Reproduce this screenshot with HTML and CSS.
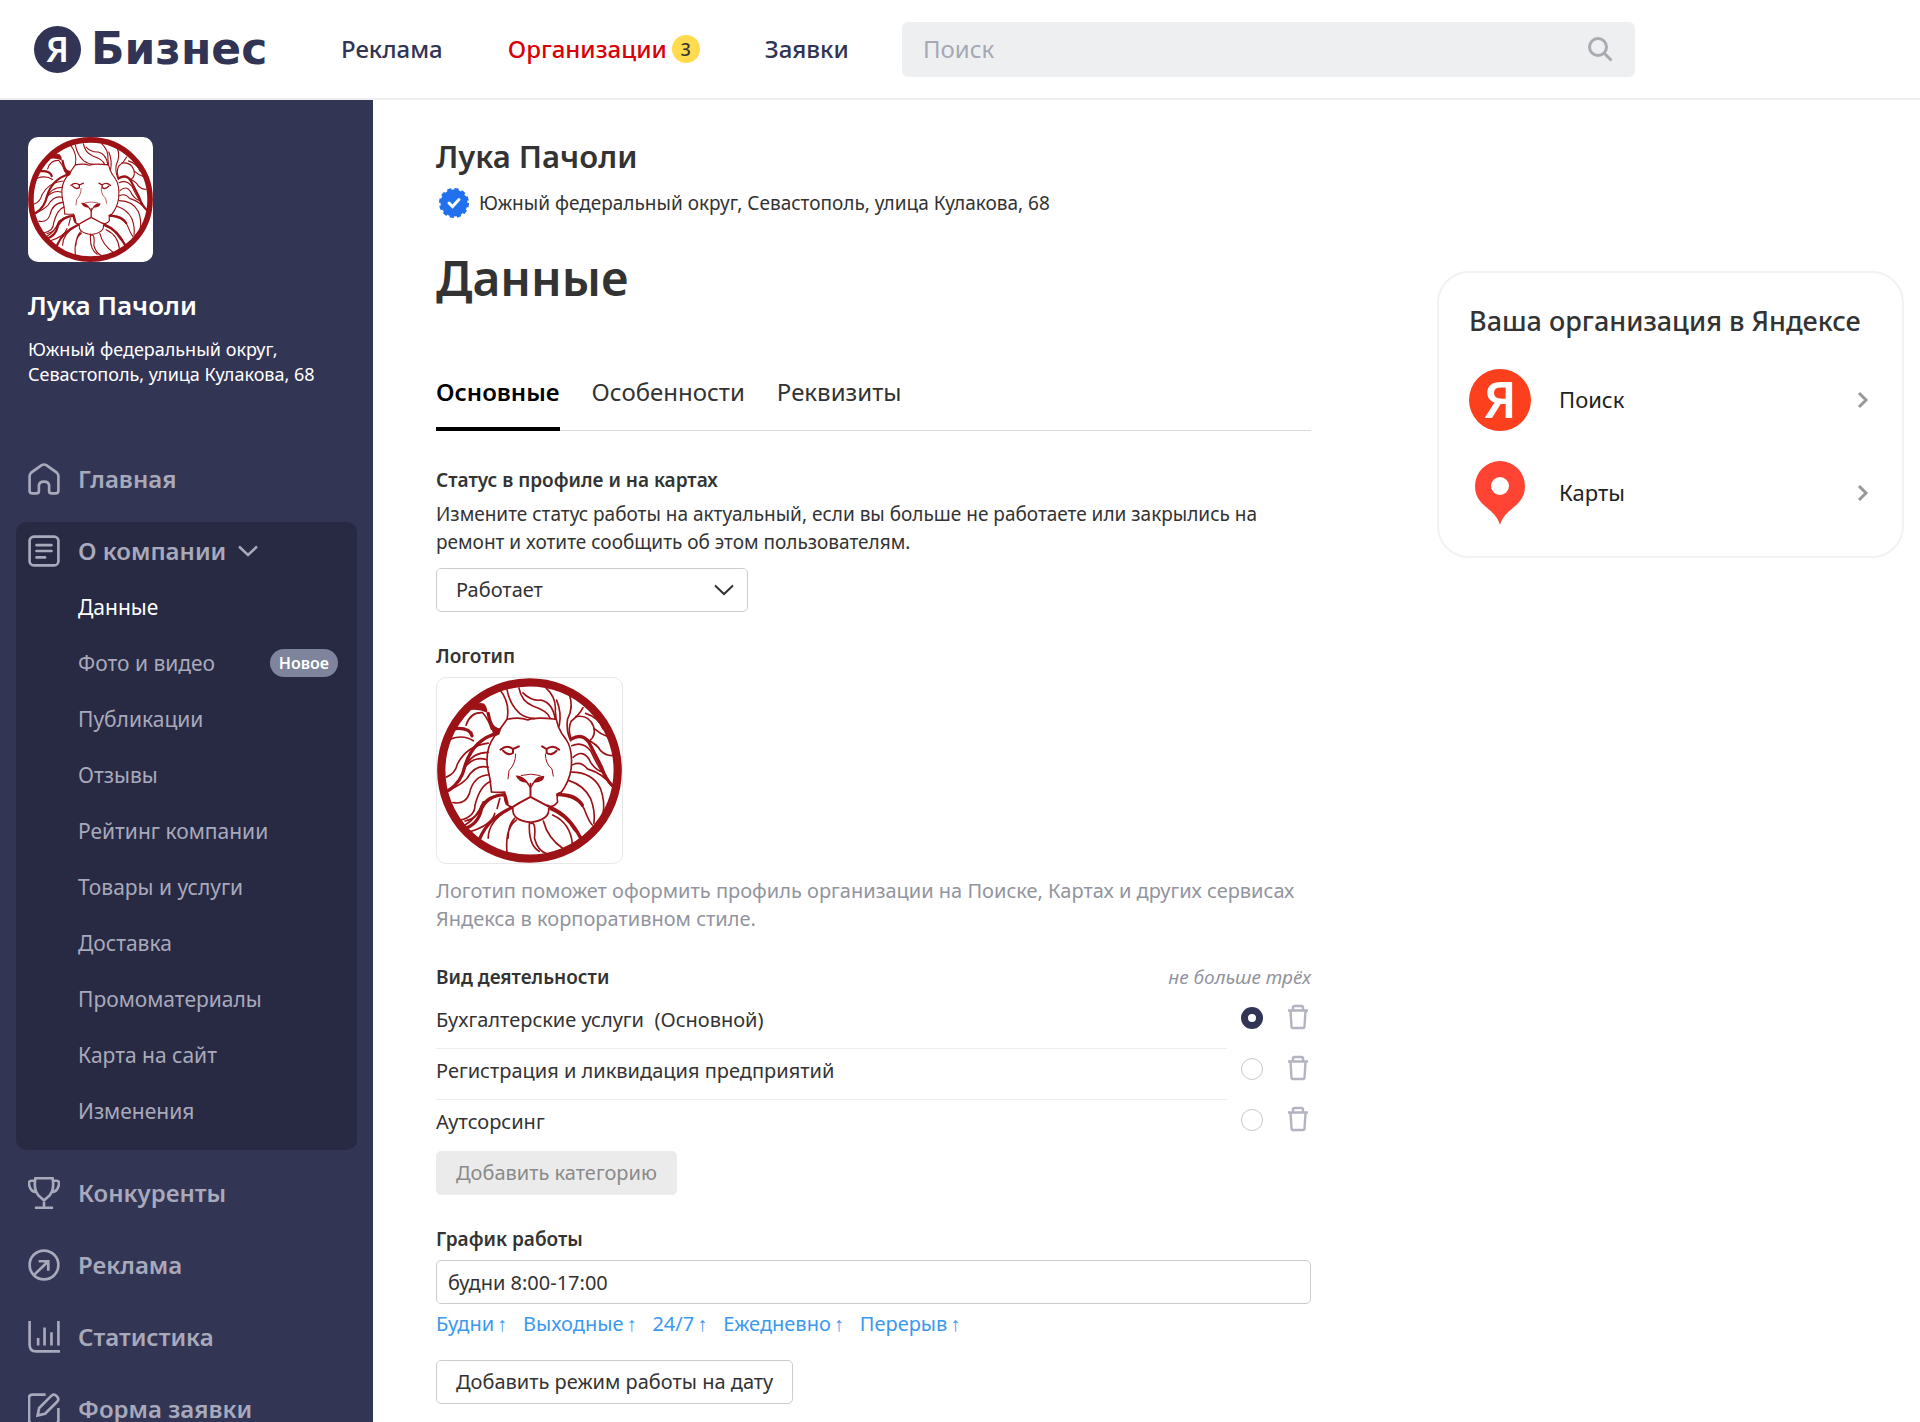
FILE: index.html
```html
<!DOCTYPE html>
<html lang="ru">
<head>
<meta charset="utf-8">
<meta name="viewport" content="width=device-width, initial-scale=1">
<title>Яндекс Бизнес — Данные</title>
<link rel="stylesheet" href="styles.css">
</head>
<body>
<svg class="sprite" aria-hidden="true">
  <symbol id="lion" viewBox="50 115 560 560">
    <g fill="none" stroke="#9c1216" stroke-linecap="round" stroke-linejoin="round">
      <circle cx="330" cy="395" r="267" stroke-width="25"/>
      <g stroke-width="5">
        <path d="M262 240 Q300 232 325 242 Q345 232 410 240"/>
        <path d="M240 150 Q272 190 262 240 Q245 265 225 290 Q195 330 203 385 Q212 420 215 460"/>
        <path d="M262 150 Q270 195 300 222 Q318 236 345 238"/>
        <path d="M298 145 Q305 185 340 200 Q385 215 392 236"/>
        <path d="M310 160 Q335 185 365 182 Q400 190 408 240"/>
        <path d="M380 145 Q412 175 408 215 Q410 265 440 300 Q462 330 456 390 Q450 430 425 462"/>
        <path d="M450 165 Q465 200 445 240 Q440 275 455 305"/>
        <path d="M412 182 Q428 220 420 260"/>
        <path d="M492 205 Q480 228 456 246 Q445 270 455 296"/>
        <path d="M470 232 Q510 225 524 262 Q532 290 512 305"/>
        <path d="M500 222 Q540 235 552 268 M526 268 Q545 285 566 292"/>
        <path d="M138 258 Q150 218 188 220 Q206 240 215 270"/>
        <path d="M90 300 Q130 285 160 305"/>
        <path d="M78 415 Q105 405 112 375 Q140 320 205 312"/>
        <path d="M90 455 Q120 430 130 395 Q150 340 205 340"/>
        <path d="M130 390 Q160 350 200 362"/>
        <path d="M85 455 Q120 440 140 420 Q165 375 205 385"/>
        <path d="M98 492 Q135 500 148 465 Q160 410 208 408"/>
        <path d="M120 545 Q165 535 165 500 Q180 440 212 428"/>
        <path d="M135 548 Q175 540 185 500 Q205 470 250 468"/>
        <path d="M458 320 Q490 305 515 335 Q545 400 580 442"/>
        <path d="M500 300 Q535 315 545 335 Q560 350 580 350"/>
        <path d="M462 355 Q490 330 510 360 Q520 385 545 398"/>
        <path d="M460 378 Q485 365 505 390 Q555 405 580 442"/>
        <path d="M458 400 Q520 400 545 450 Q560 490 552 530"/>
        <path d="M448 425 Q495 440 515 480 Q530 520 525 555"/>
        <path d="M420 470 Q475 475 495 510 Q510 550 520 560"/>
        <path d="M215 460 Q235 462 255 460 Q250 500 275 505"/>
        <path d="M425 462 Q410 460 415 490 Q400 510 385 500"/>
        <path d="M280 510 Q275 545 332 552 Q392 545 388 510"/>
        <path d="M205 600 Q205 550 265 515 M150 580 Q215 560 225 525"/>
        <path d="M262 645 Q255 570 290 545 M265 600 Q265 560 285 540"/>
        <path d="M330 550 Q325 620 360 640 M335 555 Q350 550 345 600 Q355 640 385 648"/>
        <path d="M372 548 Q385 600 432 632"/>
        <path d="M400 530 Q455 555 460 620 M392 512 Q440 530 465 575 L490 600"/>
        <path d="M190 490 Q170 540 135 560 M240 480 L232 510"/>
      </g>
      <g stroke-width="10">
        <path d="M105 268 Q150 265 156 290"/>
        <path d="M85 455 Q125 430 135 380 Q160 300 235 282 Q210 260 205 222"/>
        <path d="M456 300 Q490 280 510 310 L548 385 Q560 420 580 440"/>
        <path d="M130 572 Q175 560 185 510 Q205 470 255 468 L262 495"/>
        <path d="M415 468 Q470 465 490 500"/>
        <path d="M275 508 Q205 540 180 600"/>
        <path d="M395 508 Q450 530 485 600"/>
      </g>
      <g stroke-width="6">
        <path d="M333 435 L333 475 Q300 492 275 508 M333 475 Q365 492 395 508"/>
        <path d="M242 332 Q262 315 280 330 L298 322 M250 335 Q265 352 280 342 L280 330"/>
        <path d="M420 332 Q400 315 382 330 L368 322 M412 335 Q397 352 382 342 L382 330"/>
        <path d="M288 345 Q288 375 268 395 L265 420 M378 345 Q378 375 398 390 L402 412" stroke-width="3"/>
        <path d="M305 410 Q333 402 362 410" stroke-width="3"/>
      </g>
    </g>
    <g fill="#9c1216">
      <path d="M288 410 Q310 408 328 434 L333 445 L338 434 Q352 408 375 412 Q374 430 345 432 L333 450 L320 432 Q296 430 288 410Z"/>
      <path d="M140 215 Q165 185 192 192 Q204 205 202 220 Q170 205 140 215Z"/>
      <path d="M210 240 Q222 268 245 268 Q240 290 222 292 Q214 270 210 240Z"/>
    </g>
  </symbol>
  <symbol id="trash" viewBox="0 0 22 26">
    <g fill="none" stroke="#b3b4c2" stroke-width="2.400">
      <path d="M1 6.500H21M6 6V3.500Q6 2 7.500 2H14.500Q16 2 16 3.500V6" />
      <path d="M3.500 7L4.500 22.500Q4.600 24 6 24H16Q17.400 24 17.500 22.500L18.500 7"/>
    </g>
  </symbol>
  <symbol id="chevron" viewBox="0 0 12 18">
    <path d="M2 2L9 9L2 16" fill="none" stroke="#999" stroke-width="3"/>
  </symbol>
</svg>

<header class="header">
  <a class="brand" href="#"><span class="brand-mark">Я</span><span class="brand-name">Бизнес</span></a>
  <nav class="topnav">
    <a href="#">Реклама</a>
    <a class="topnav-active" href="#">Организации<span class="count">3</span></a>
    <a href="#">Заявки</a>
  </nav>
  <label class="search">
    <input type="search" placeholder="Поиск" aria-label="Поиск">
    <svg width="26" height="26" viewBox="0 0 26 26" fill="none" stroke="#a9abb3" stroke-width="3"><circle cx="11" cy="11" r="8.500"/><path d="M17 17L24.500 24.500"/></svg>
  </label>
</header>

<div class="shell">
  <aside class="sidebar">
    <div class="profile">
      <svg class="avatar" role="img" aria-label="Лука Пачоли"><use href="#lion"/></svg>
      <p class="profile-name">Лука Пачоли</p>
      <p class="profile-address">Южный федеральный округ, Севастополь, улица Кулакова, 68</p>
    </div>
    <nav class="menu">
      <a class="menu-item" href="#">
        <svg class="icon" viewBox="0 0 30 30"><path d="M1.500 12.500Q1.500 10.500 3 9L12.500 2.200Q15 .6 17.500 2.200L27 9Q28.500 10.500 28.500 12.500V26Q28.500 28.500 26 28.500H22Q19.800 28.500 19.800 26.500V21.500Q19.800 17.500 15 17.500T10.200 21.500V26.500Q10.200 28.500 8 28.500H4Q1.500 28.500 1.500 26Z"/></svg>
        Главная</a>
      <div class="menu-group">
        <a class="menu-item" href="#">
          <svg class="icon" viewBox="0 0 30 30"><rect x="1.500" y="1.500" width="27" height="27" rx="4"/><path d="M8 9.500H22M8 15H22M8 21H16" stroke-linecap="round"/></svg>
          О компании
          <svg class="menu-arrow" viewBox="0 0 20 12"><path d="M1 1.500L10 10L19 1.500"/></svg></a>
        <a class="sub-item sub-active" href="#">Данные</a>
        <a class="sub-item" href="#">Фото и видео<span class="new">Новое</span></a>
        <a class="sub-item" href="#">Публикации</a>
        <a class="sub-item" href="#">Отзывы</a>
        <a class="sub-item" href="#">Рейтинг компании</a>
        <a class="sub-item" href="#">Товары и услуги</a>
        <a class="sub-item" href="#">Доставка</a>
        <a class="sub-item" href="#">Промоматериалы</a>
        <a class="sub-item" href="#">Карта на сайт</a>
        <a class="sub-item" href="#">Изменения</a>
      </div>
      <a class="menu-item" href="#">
        <svg class="icon" viewBox="0 0 30 30"><path d="M7 1H23Q25 11 20.500 17L15 22L9.500 17Q5 11 7 1ZM6.500 3.500H3Q.5 3.500 1 7Q2 14 8.500 14.500M23.500 3.500H27Q29.500 3.500 29 7Q28 14 21.500 14.500M15 22V28.500M6.500 28.800H23.500"/></svg>
        Конкуренты</a>
      <a class="menu-item" href="#">
        <svg class="icon" viewBox="0 0 30 30"><circle cx="15" cy="15" r="13.500"/><path d="M6 24L19 11.500M10 11.500H19V20.500"/></svg>
        Реклама</a>
      <a class="menu-item" href="#">
        <svg class="icon" viewBox="0 0 30 30"><path d="M1.500 0V22Q1.500 28.500 7.500 28.500H30M28.500 0V23M9.500 16V23M15.500 6V23M22 10.500V23"/></svg>
        Статистика</a>
      <a class="menu-item" href="#">
        <svg class="icon" viewBox="0 0 30 30"><path d="M16.500 1.500H4Q1 1.500 1 4.500V25.500Q1 28.500 4 28.500H25.500Q28.500 28.500 28.500 25.500V14M9 21L10.500 14L22 2.500Q24.500 .5 27 3T27.500 8L16 19.500Z"/></svg>
        Форма заявки</a>
    </nav>
  </aside>

  <main class="main">
    <div class="content">
      <h2 class="org-name">Лука Пачоли</h2>
      <p class="org-address">
        <svg width="32" height="32" viewBox="0 0 32 32"><g fill="#2170ee"><circle cx="16" cy="16" r="13.500"/><circle cx="16" cy="16" r="13.800" fill="none" stroke="#2170ee" stroke-width="2.500" stroke-dasharray="4.200 3.025"/></g><path d="M11 16L14.500 19.500L21 12.500" fill="none" stroke="#fff" stroke-width="3" stroke-linecap="round"/></svg>
        Южный федеральный округ, Севастополь, улица Кулакова, 68</p>
      <h1 class="page-title">Данные</h1>
      <nav class="tabs">
        <a class="tab-active" href="#">Основные</a>
        <a href="#">Особенности</a>
        <a href="#">Реквизиты</a>
      </nav>

      <section class="field">
        <label class="label" for="status">Статус в профиле и на картах</label>
        <p class="text">Измените статус работы на актуальный, если вы больше не работаете или закрылись на ремонт и хотите сообщить об этом пользователям.</p>
        <div class="select">
          <select id="status"><option>Работает</option></select>
          <svg viewBox="0 0 20 12"><path d="M1 1.500L10 10L19 1.500" fill="none" stroke="#333" stroke-width="2"/></svg>
        </div>
      </section>

      <section class="field">
        <h3 class="label">Логотип</h3>
        <svg class="logo-preview" role="img" aria-label="Логотип"><use href="#lion"/></svg>
        <p class="hint">Логотип поможет оформить профиль организации на Поиске, Картах и других сервисах Яндекса в корпоративном стиле.</p>
      </section>

      <section class="field">
        <div class="label-row"><h3 class="label">Вид деятельности</h3><em class="limit">не больше трёх</em></div>
        <div class="activity">
          <label for="act1">Бухгалтерские услуги&nbsp; (Основной)</label>
          <input type="radio" id="act1" name="activity" checked>
          <button type="button" aria-label="Удалить"><svg><use href="#trash"/></svg></button>
        </div>
        <div class="activity">
          <label for="act2">Регистрация и ликвидация предприятий</label>
          <input type="radio" id="act2" name="activity">
          <button type="button" aria-label="Удалить"><svg><use href="#trash"/></svg></button>
        </div>
        <div class="activity">
          <label for="act3">Аутсорсинг</label>
          <input type="radio" id="act3" name="activity">
          <button type="button" aria-label="Удалить"><svg><use href="#trash"/></svg></button>
        </div>
        <button class="button" type="button" disabled>Добавить категорию</button>
      </section>

      <section class="field">
        <label class="label" for="hours">График работы</label>
        <input class="textbox" id="hours" type="text" value="будни 8:00-17:00">
        <div class="presets">
          <a href="#">Будни<span>↑</span></a>
          <a href="#">Выходные<span>↑</span></a>
          <a href="#">24/7<span>↑</span></a>
          <a href="#">Ежедневно<span>↑</span></a>
          <a href="#">Перерыв<span>↑</span></a>
        </div>
        <button class="button" type="button">Добавить режим работы на дату</button>
      </section>
    </div>

    <aside class="card">
      <h2>Ваша организация в Яндексе</h2>
      <a class="service" href="#">
        <span class="service-ya">Я</span>
        <span class="service-name">Поиск</span>
        <svg class="service-arrow"><use href="#chevron"/></svg>
      </a>
      <a class="service" href="#">
        <svg class="service-pin" viewBox="0 0 62 64"><path d="M31 0A25 25 0 0 0 6 25C6 46 26 46 31 64C36 46 56 46 56 25A25 25 0 0 0 31 0Z" fill="#ff4433"/><circle cx="31" cy="25" r="9" fill="#fff"/></svg>
        <span class="service-name">Карты</span>
        <svg class="service-arrow"><use href="#chevron"/></svg>
      </a>
    </aside>
  </main>
</div>
</body>
</html>
```
FILE: styles.css
```css
* { box-sizing: border-box; }

body {
  display: flex;
  flex-direction: column;
  height: 100vh;
  margin: 0;
  overflow: hidden;
  background: #fff;
  color: #333;
  font: 19px/28px "Noto Sans", "Open Sans", sans-serif;
}

a { color: inherit; text-decoration: none; }
h1, h2, h3, p { margin: 0; }
button, input, select { font: inherit; color: inherit; }

.sprite { display: none; }

/* Header */
.header {
  display: flex;
  align-items: center;
  flex: none;
  height: 100px;
  padding: 0 34px;
  border-bottom: 2px solid #eeeeef;
  color: #313454;
}

.brand { display: flex; align-items: center; gap: 10px; width: 307px; }
.brand-mark {
  display: flex;
  align-items: center;
  justify-content: center;
  width: 47px;
  height: 47px;
  border-radius: 50%;
  background: #313454;
  color: #fff;
  font: 600 35px/46px "Noto Sans", sans-serif;
}
.brand-name { font: bold 44px/46px "DejaVu Sans", sans-serif; }

.topnav { display: flex; gap: 65px; width: 561px; font-size: 24px; font-weight: 500; }
.topnav a { display: flex; align-items: center; gap: 5px; }
.topnav-active { color: #d90007; }
.count {
  width: 28px;
  border-radius: 14px;
  background: #ffdb4d;
  color: #333;
  font-size: 18px;
  text-align: center;
}

.search {
  display: flex;
  align-items: center;
  width: 733px;
  height: 55px;
  padding: 0 22px 0 21px;
  border-radius: 6px;
  background: #eeeff1;
}
.search input {
  flex: 1;
  padding: 0;
  border: 0;
  background: none;
  font-size: 24px;
}
.search input::placeholder { color: #a6a8b5; opacity: 1; }

/* Sidebar */
.shell { display: flex; flex: 1; min-height: 0; }

.sidebar {
  flex: none;
  width: 373px;
  overflow: hidden;
  background: #333555;
  color: #fff;
}
.profile { height: 350px; padding: 37px 28px 0; }
.avatar { display: block; width: 125px; height: 125px; border-radius: 10px; background: #fff; }
.profile-name { margin-top: 25px; font-size: 26px; font-weight: 600; line-height: 36px; }
.profile-address { margin-top: 14px; font-size: 18px; line-height: 25px; }

.menu {
  display: flex;
  flex-direction: column;
  gap: 14px;
  padding: 0 16px;
  color: #a8a9bb;
}
.menu-item {
  display: flex;
  align-items: center;
  height: 58px;
  padding: 0 12px;
  font-size: 24px;
  font-weight: 600;
}
.icon { width: 32px; height: 32px; margin-right: 18px; fill: none; stroke: currentColor; stroke-width: 2.5; }
.menu-arrow { width: 20px; height: 12px; margin-left: 12px; fill: none; stroke: currentColor; stroke-width: 2.5; }
.menu-group { padding-bottom: 10px; border-radius: 10px; background: #282a44; }
.sub-item {
  display: flex;
  align-items: center;
  justify-content: space-between;
  height: 56px;
  padding: 0 19px 2px 62px;
  font-size: 21px;
}
.sub-active { color: #fff; }
.new {
  padding: 0 9px;
  border-radius: 14px;
  background: #7e849c;
  color: #fff;
  font-size: 16px;
  font-weight: 600;
}

/* Page content */
.main {
  display: flex;
  flex: 1;
  justify-content: space-between;
  align-items: flex-start;
  gap: 40px;
  padding: 38px 16px 0 63px;
}
.content { flex: 0 1 875px; }
.org-name { font-size: 31px; font-weight: 600; line-height: 36px; }
.org-address { display: flex; align-items: center; gap: 9px; height: 32px; margin-top: 13px; padding-left: 2px; }
.page-title { margin-top: 29px; font-size: 48px; font-weight: 600; line-height: 60px; }

.tabs {
  display: flex;
  gap: 32px;
  height: 66px;
  margin: 57px 0 35px;
  border-bottom: 1px solid #dcdcdc;
  font-size: 24px;
}
.tabs a { height: 66px; line-height: 54px; }
.tab-active { border-bottom: 4px solid #000; color: #000; font-weight: 600; }

.field { margin-bottom: 30px; }
.label { display: block; font-size: 19px; font-weight: 600; line-height: 28px; }
.text { margin-top: 6px; }
.hint { margin-top: 13px; color: #92949e; font-size: 20px; }

.select { position: relative; width: 312px; margin-top: 12px; }
.select select {
  appearance: none;
  width: 100%;
  height: 44px;
  padding: 0 19px;
  border: 1px solid #ccc;
  border-radius: 5px;
  background: #fff;
  font-size: 20px;
}
.select svg { position: absolute; top: 16px; right: 14px; width: 20px; height: 12px; pointer-events: none; }

.logo-preview {
  display: block;
  width: 187px;
  height: 187px;
  margin-top: 7px;
  border: 1px solid #e8e8e8;
  border-radius: 10px;
}

.label-row { display: flex; justify-content: space-between; margin-bottom: 7px; }
.limit { color: #92949e; }

.activity { display: flex; align-items: center; height: 51px; }
.activity label {
  flex: 1;
  margin-right: 14px;
  padding-bottom: 6px;
  border-bottom: 1px solid #eee;
  font-size: 20px;
  line-height: 44px;
}
.activity:nth-of-type(4) label { border-color: transparent; }
.activity input {
  appearance: none;
  width: 22px;
  height: 22px;
  margin: 0 24px 12px 0;
  border: 1px solid #c8c8d0;
  border-radius: 50%;
}
.activity input:checked { border: 7px solid #313454; }
.activity button { width: 22px; height: 26px; margin: 0 2px 13px 0; padding: 0; border: 0; background: none; }
.activity svg { display: block; width: 22px; height: 26px; }

.button {
  height: 44px;
  padding: 0 19px;
  border: 1px solid #ccc;
  border-radius: 5px;
  background: #fff;
  font-size: 20px;
}
.button:disabled { border-color: #ebebeb; background: #ebebeb; color: #8a8a8a; }

.textbox {
  width: 100%;
  height: 44px;
  margin-top: 7px;
  padding: 0 11px;
  border: 1px solid #ccc;
  border-radius: 5px;
  font-size: 20px;
}
.presets { display: flex; gap: 16px; margin: 6px 0 22px; color: #3b99f0; font-size: 20px; }
.presets span { margin-left: 3px; }

/* Services card */
.card {
  flex: 0 0 467px;
  height: 287px;
  margin-top: 133px;
  padding: 30px 30px 0;
  border: 2px solid #f2f2f2;
  border-radius: 32px;
}
.card h2 { font-size: 27px; font-weight: 500; line-height: 36px; }
.service { display: flex; align-items: center; height: 64px; margin-top: 29px; color: #222; }
.service-ya {
  width: 62px;
  height: 62px;
  border-radius: 50%;
  background: #fc3f1d;
  color: #fff;
  font: 600 50px/60px "Noto Sans", sans-serif;
  text-align: center;
}
.service-pin { width: 62px; height: 64px; }
.service-name { flex: 1; margin-left: 28px; padding-bottom: 3px; font-size: 22px; }
.service-arrow { width: 12px; height: 18px; margin-right: 3px; }
```
